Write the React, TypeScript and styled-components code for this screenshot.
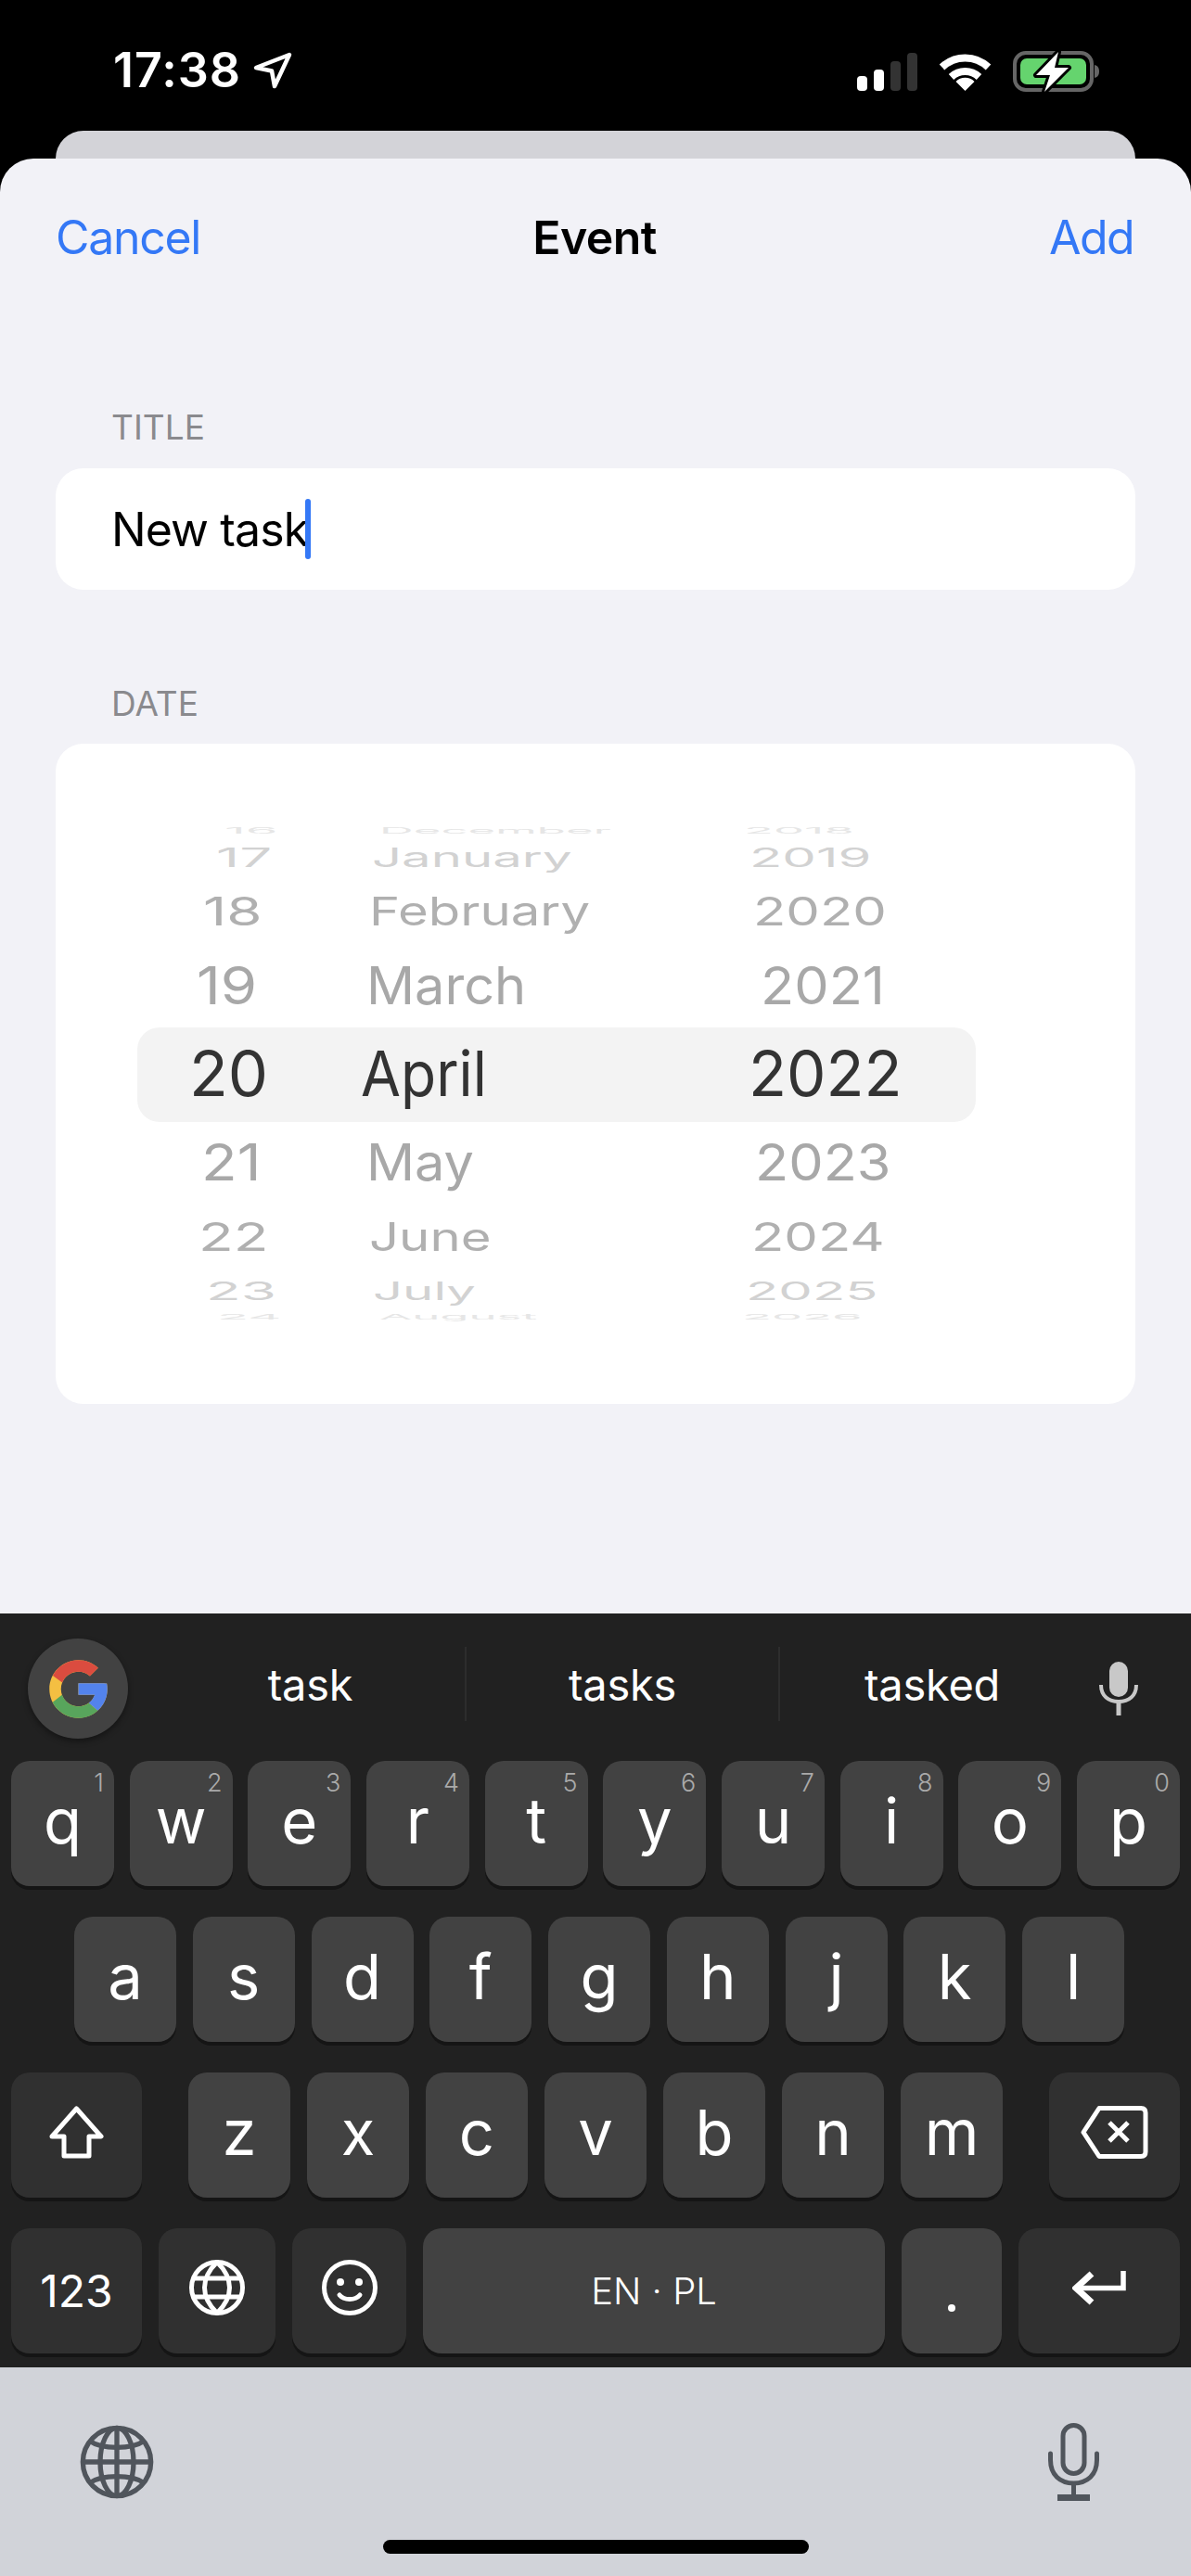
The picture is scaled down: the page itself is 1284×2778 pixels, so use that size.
import React, { FC } from 'react'
import styled, { createGlobalStyle } from 'styled-components'

const BLUE = '#3478f6'
const IOS_FONT = `Inter, "Noto Sans", sans-serif`

const GlobalStyle = createGlobalStyle`
  html, body { margin: 0; padding: 0; background: #000; }
  * { box-sizing: border-box; }
`

// x = left edge of the text in page pixels, one per wheel
interface WheelRow {
  day: string
  month: string
  year: string
  x: [number, number, number]
  height: number
  sx: number
  sy: number
  color: string
  active?: boolean
}

const WHEEL: WheelRow[] = [
  { day: '16', month: 'December', year: '2018', x: [245, 412, 805], height: 16, sx: 0.76, sy: 0.13, color: '#e6e6e6' },
  { day: '17', month: 'January', year: '2019', x: [236, 404, 811], height: 42, sx: 0.84, sy: 0.42, color: '#d2d2d2' },
  { day: '18', month: 'February', year: '2020', x: [222, 401, 815], height: 74, sx: 0.84, sy: 0.64, color: '#b0b0b0' },
  { day: '19', month: 'March', year: '2021', x: [215, 398, 823], height: 86, sx: 0.86, sy: 0.84, color: '#a8a8a8' },
  { day: '20', month: 'April', year: '2022', x: [207, 392, 810], height: 103, sx: 0.93, sy: 1, color: '#333333', active: true },
  { day: '21', month: 'May', year: '2023', x: [220, 398, 817], height: 88, sx: 0.86, sy: 0.82, color: '#a8a8a8' },
  { day: '22', month: 'June', year: '2024', x: [217, 401, 813], height: 74, sx: 0.84, sy: 0.63, color: '#b0b0b0' },
  { day: '23', month: 'July', year: '2025', x: [225, 405, 807], height: 42, sx: 0.84, sy: 0.41, color: '#d2d2d2' },
  { day: '24', month: 'August', year: '2026', x: [237, 412, 803], height: 14, sx: 0.76, sy: 0.12, color: '#e6e6e6' },
]

const WHEEL_COLUMNS = [60, 380, 780]
const WHEEL_WIDTHS = [320, 400, 444]
const TEXT_BEARING = 3

// digits are set wider than the month names
const columnStretch = (column: number, active?: boolean) => {
  if (column === 0) return 1.1
  if (column === 2) return active ? 1.08 : 1.03
  return 1
}

const ROW_ONE = [
  ['q', '1'], ['w', '2'], ['e', '3'], ['r', '4'], ['t', '5'],
  ['y', '6'], ['u', '7'], ['i', '8'], ['o', '9'], ['p', '0'],
]

const LocationIcon = () => (
  <svg width="42" height="40" viewBox="0 0 42 40" fill="none">
    <path d="M39 3 L3 17 L20 20.5 L23 37 Z" stroke="#fff" strokeWidth="4.5" strokeLinejoin="round" />
  </svg>
)

const SignalIcon = () => (
  <svg width="65" height="41" viewBox="0 0 65 41">
    <rect x="0" y="25" width="11" height="16" rx="4" fill="#fff" />
    <rect x="18" y="18" width="11" height="23" rx="4" fill="#fff" />
    <rect x="36" y="9" width="11" height="32" rx="4" fill="#333" />
    <rect x="54" y="0" width="11" height="41" rx="4" fill="#333" />
  </svg>
)

const WifiIcon = () => (
  <svg width="57" height="41" viewBox="0 0 57 41" fill="none">
    <path d="M3.5 15.5 A36 36 0 0 1 53.5 15.5" stroke="#fff" strokeWidth="8" />
    <path d="M13.5 26 A22 22 0 0 1 43.5 26" stroke="#fff" strokeWidth="8" />
    <path d="M28.5 41 L18.5 31 A14 14 0 0 1 38.5 31 Z" fill="#fff" />
  </svg>
)

const BatteryIcon = () => (
  <svg width="94" height="48" viewBox="0 0 94 48" fill="none">
    <rect x="2" y="4" width="83" height="40" rx="12" stroke="#666" strokeWidth="4" />
    <rect x="8" y="10" width="71" height="28" rx="7" fill="#65d46e" />
    <path d="M88 17 C92 18 93 21 93 24 C93 27 92 30 88 31 Z" fill="#666" />
    <path
      d="M49 3 L25 28 L40 28 L34 46 L60 20 L45 20 Z"
      fill="#fff"
      stroke="#000"
      strokeWidth="6"
      strokeLinejoin="round"
      paintOrder="stroke"
    />
  </svg>
)

const GoogleLogo = () => (
  <svg width="75" height="75" viewBox="0 0 48 48">
    <path fill="#f4bf42" d="M43.611 20.083H42V20H24v8h11.303c-1.649 4.657-6.08 8-11.303 8-6.627 0-12-5.373-12-12s5.373-12 12-12c3.059 0 5.842 1.154 7.961 3.039l5.657-5.657C34.046 6.053 29.268 4 24 4 12.955 4 4 12.955 4 24s8.955 20 20 20 20-8.955 20-20c0-1.341-.138-2.65-.389-3.917z" />
    <path fill="#db4c3f" d="M6.306 14.691l6.571 4.819C14.655 15.108 18.961 12 24 12c3.059 0 5.842 1.154 7.961 3.039l5.657-5.657C34.046 6.053 29.268 4 24 4 16.318 4 9.656 8.337 6.306 14.691z" />
    <path fill="#58a55c" d="M24 44c5.166 0 9.86-1.977 13.409-5.192l-6.19-5.238A11.91 11.91 0 0 1 24 36c-5.202 0-9.619-3.317-11.283-7.946l-6.522 5.025C9.505 39.556 16.227 44 24 44z" />
    <path fill="#5383ec" d="M43.611 20.083H42V20H24v8h11.303a12.04 12.04 0 0 1-4.087 5.571l.003-.002 6.19 5.238C36.971 39.205 44 34 44 24c0-1.341-.138-2.65-.389-3.917z" />
  </svg>
)

const SuggestMic = () => (
  <svg width="42" height="58" viewBox="0 0 42 58" fill="none">
    <rect x="11" y="0" width="20" height="38" rx="10" fill="#c8c8c8" />
    <path d="M2 25 C2 37 10 43 21 43 C32 43 40 37 40 25" stroke="#c8c8c8" strokeWidth="4" />
    <path d="M21 43 V58" stroke="#c8c8c8" strokeWidth="5" />
  </svg>
)

const ShiftIcon = () => (
  <svg width="59" height="57" viewBox="0 0 59 57" fill="none">
    <path d="M29.5 3 L56 33 H43 V54 H16 V33 H3 Z" stroke="#fff" strokeWidth="5" strokeLinejoin="round" />
  </svg>
)

const BackspaceIcon = () => (
  <svg width="73" height="57" viewBox="0 0 73 57" fill="none">
    <path d="M20 2.5 H65 Q70 2.5 70 7.5 V49.5 Q70 54.5 65 54.5 H20 L3 28.5 Z" stroke="#fff" strokeWidth="5" strokeLinejoin="round" />
    <path d="M31 18 L51 38 M51 18 L31 38" stroke="#fff" strokeWidth="5" />
  </svg>
)

const KeyGlobeIcon = () => (
  <svg width="60" height="60" viewBox="0 0 60 60" fill="none" stroke="#fff" strokeWidth="5">
    <circle cx="30" cy="30" r="27.5" />
    <path d="M30 2.5 C12 20 12 40 30 57.5 C48 40 48 20 30 2.5 Z" />
    <path d="M5 20 H55 M5 40 H55" />
  </svg>
)

const BottomGlobeIcon = () => (
  <svg width="80" height="80" viewBox="0 0 60 60" fill="none" stroke="#50555c" strokeWidth="4">
    <circle cx="30" cy="30" r="27.5" />
    <ellipse cx="30" cy="30" rx="13.5" ry="27.5" />
    <path d="M30 2.5 V57.5 M2.5 30 H57.5" />
    <path d="M8 13 C18 20 42 20 52 13 M8 47 C18 40 42 40 52 47" />
  </svg>
)

const EmojiIcon = () => (
  <svg width="60" height="60" viewBox="0 0 60 60" fill="none">
    <circle cx="30" cy="30" r="27.5" stroke="#fff" strokeWidth="5" />
    <circle cx="20" cy="24" r="4" fill="#fff" />
    <circle cx="40" cy="24" r="4" fill="#fff" />
    <path d="M19 38 C24 44 36 44 41 38" stroke="#fff" strokeWidth="5" strokeLinecap="round" />
  </svg>
)

const ReturnIcon = () => (
  <svg width="58" height="37" viewBox="0 0 58 37" fill="none" stroke="#fff">
    <path d="M55 0 V18.5 H4" strokeWidth="5.5" />
    <path d="M21 3 L4 18.5 L21 34" strokeWidth="7" />
  </svg>
)

const BottomMic = () => (
  <svg width="55" height="84" viewBox="0 0 55 84" fill="none" stroke="#50555c">
    <rect x="16" y="2.5" width="23" height="52" rx="11.5" strokeWidth="5" />
    <path d="M2.5 33 V40 C2.5 56 13 65 27.5 65 C42 65 52.5 56 52.5 40 V33" strokeWidth="5" strokeLinecap="round" />
    <path d="M27.5 65 V80" strokeWidth="5" />
    <path d="M10 80.5 H45" strokeWidth="7" />
  </svg>
)

const App: FC = () => (
  <Screen>
    <GlobalStyle />
    <StatusBar>
      <Clock>
        <Time>17:38</Time>
        <LocationIcon />
      </Clock>
      <StatusIcons>
        <SignalIcon />
        <WifiIcon />
        <BatteryIcon />
      </StatusIcons>
    </StatusBar>
    <BackCard />
    <Sheet>
      <NavBar>
        <NavAction>Cancel</NavAction>
        <NavTitle>Event</NavTitle>
        <NavAction $right>Add</NavAction>
      </NavBar>

      <FieldLabel $top={97}>TITLE</FieldLabel>
      <TitleField>
        New task
        <Caret />
      </TitleField>

      <FieldLabel $top={100}>DATE</FieldLabel>
      <DateCard>
        <WheelHighlight />
        {WHEEL.map(row => (
          <WheelLine key={row.day} $height={row.height}>
            {[row.day, row.month, row.year].map((label, i) => (
              <WheelColumn key={label} $width={WHEEL_WIDTHS[i]}>
                <WheelText
                  $offset={row.x[i] - WHEEL_COLUMNS[i] - TEXT_BEARING}
                  $sx={row.sx * columnStretch(i, row.active)}
                  $sy={row.sy}
                  $color={row.color}
                >
                  {label}
                </WheelText>
              </WheelColumn>
            ))}
          </WheelLine>
        ))}
      </DateCard>
    </Sheet>

    <Keyboard>
      <SuggestionBar>
        <GoogleBadge>
          <GoogleLogo />
        </GoogleBadge>
        <Suggestions>
          <Suggestion $width={335}>task</Suggestion>
          <Suggestion $width={338}>tasks</Suggestion>
          <Suggestion $width={328} $last>
            tasked
          </Suggestion>
        </Suggestions>
        <MicSlot>
          <SuggestMic />
        </MicSlot>
      </SuggestionBar>

      <KeyRows>
        <KeyRow>
          {ROW_ONE.map(([letter, hint]) => (
            <Key key={letter} $width={111}>
              <Hint>{hint}</Hint>
              {letter}
            </Key>
          ))}
        </KeyRow>
        <KeyRow $left={68} $right={60}>
          {'asdfghjkl'.split('').map(letter => (
            <Key key={letter} $width={110}>
              {letter}
            </Key>
          ))}
        </KeyRow>
        <KeyRow>
          <Key $width={141} $special>
            <ShiftIcon />
          </Key>
          <LetterGroup>
            {'zxcvbnm'.split('').map(letter => (
              <Key key={letter} $width={110}>
                {letter}
              </Key>
            ))}
          </LetterGroup>
          <Key $width={141} $special>
            <BackspaceIcon />
          </Key>
        </KeyRow>
        <KeyRow>
          <Key $width={141} $special $small>
            123
          </Key>
          <Key $width={126} $special>
            <KeyGlobeIcon />
          </Key>
          <Key $width={123} $special>
            <EmojiIcon />
          </Key>
          <SpaceKey>EN · PL</SpaceKey>
          <Key $width={108}>
            <Dot />
          </Key>
          <Key $width={174} $special>
            <ReturnIcon />
          </Key>
        </KeyRow>
      </KeyRows>
    </Keyboard>

    <BottomBar>
      <BottomIcons>
        <BottomGlobeIcon />
        <BottomMic />
      </BottomIcons>
      <HomeIndicator />
    </BottomBar>
  </Screen>
)

const Screen = styled.div`
  width: 1284px;
  height: 2778px;
  background: #000;
  overflow: hidden;
  display: flex;
  flex-direction: column;
  font-family: ${IOS_FONT};
`
const StatusBar = styled.div`
  height: 141px;
  flex: none;
  padding: 53px 98px 0 122px;
  display: flex;
  justify-content: space-between;
  align-items: flex-start;
`
const Clock = styled.div`
  display: flex;
  align-items: center;
  gap: 13px;
  height: 46px;
  color: #fff;
`
const Time = styled.span`
  font-size: 52px;
  font-weight: 600;
  letter-spacing: 1px;
  line-height: 46px;
`
const StatusIcons = styled.div`
  display: flex;
  align-items: center;
  gap: 23px;
  height: 48px;
`
const BackCard = styled.div`
  height: 30px;
  flex: none;
  margin: 0 60px;
  background: #d3d3d8;
  border-radius: 30px 30px 0 0;
`
const Sheet = styled.div`
  height: 1569px;
  flex: none;
  background: #f2f2f7;
  border-radius: 36px 36px 0 0;
  display: flex;
  flex-direction: column;
`
const NavBar = styled.div`
  height: 170px;
  flex: none;
  padding: 0 62px 0 60px;
  display: grid;
  grid-template-columns: 1fr auto 1fr;
  align-items: center;
`
const NavAction = styled.span<{ $right?: boolean }>`
  font-size: 50px;
  letter-spacing: ${p => (p.$right ? -1.6 : -1.3)}px;
  text-align: ${p => (p.$right ? 'right' : 'left')};
  color: ${BLUE};
`
const NavTitle = styled.span`
  font-size: 50px;
  font-weight: 600;
  letter-spacing: -0.6px;
  color: #000;
`
const FieldLabel = styled.div<{ $top: number }>`
  margin-top: ${p => p.$top}px;
  padding-left: 120px;
  height: 46px;
  line-height: 46px;
  font-size: 37px;
  color: #8a8a8e;
`
const TitleField = styled.div`
  margin: 21px 60px 0;
  height: 131px;
  padding-left: 60px;
  background: #fff;
  border-radius: 30px;
  display: flex;
  align-items: center;
  font-size: 50px;
  letter-spacing: -0.9px;
  color: #000;
`
const Caret = styled.span`
  width: 6px;
  height: 65px;
  margin-left: -3px;
  border-radius: 3px;
  background: ${BLUE};
`
const DateCard = styled.div`
  position: relative;
  margin: 20px 60px 0;
  height: 712px;
  padding-top: 86px;
  background: #fff;
  border-radius: 30px;
`
const WheelHighlight = styled.div`
  position: absolute;
  top: 306px;
  left: 88px;
  width: 904px;
  height: 102px;
  border-radius: 24px;
  background: #f3f3f3;
`
const WheelLine = styled.div<{ $height: number }>`
  position: relative;
  height: ${p => p.$height}px;
  display: flex;
`
const WheelColumn = styled.div<{ $width: number }>`
  width: ${p => p.$width}px;
  display: flex;
  align-items: center;
`
const WheelText = styled.span<{ $offset: number; $sx: number; $sy: number; $color: string }>`
  margin-left: ${p => p.$offset}px;
  font-size: 67px;
  line-height: 70px;
  white-space: nowrap;
  color: ${p => p.$color};
  transform: scale(${p => p.$sx}, ${p => p.$sy});
  transform-origin: left center;
`
const Keyboard = styled.div`
  height: 813px;
  flex: none;
  padding-top: 27px;
  background: #212121;
  color: #fff;
`
const SuggestionBar = styled.div`
  height: 108px;
  padding-left: 30px;
  display: flex;
  align-items: center;
`
const GoogleBadge = styled.div`
  width: 108px;
  height: 108px;
  flex: none;
  border-radius: 50%;
  background: #424242;
  box-shadow: 0 3px 6px rgba(0, 0, 0, 0.4);
  display: flex;
  align-items: center;
  justify-content: center;
`
const Suggestions = styled.div`
  margin-left: 30px;
  margin-bottom: 10px;
  display: flex;
`
const Suggestion = styled.div<{ $width: number; $last?: boolean }>`
  width: ${p => p.$width}px;
  height: 80px;
  display: flex;
  align-items: center;
  justify-content: center;
  font-size: 47px;
  letter-spacing: -0.3px;
  border-right: ${p => (p.$last ? 'none' : '2px solid #2d2d2d')};
`
const MicSlot = styled.div`
  margin-left: 16px;
  display: flex;
`
const KeyRows = styled.div`
  margin-top: 24px;
  padding: 0 12px;
  display: flex;
  flex-direction: column;
  gap: 33px;
`
const KeyRow = styled.div<{ $left?: number; $right?: number }>`
  display: flex;
  justify-content: space-between;
  padding: 0 ${p => p.$right || 0}px 0 ${p => p.$left || 0}px;
`
const LetterGroup = styled.div`
  display: flex;
  gap: 18px;
`
const Key = styled.div<{ $width: number; $special?: boolean; $small?: boolean }>`
  position: relative;
  width: ${p => p.$width}px;
  height: 135px;
  flex: none;
  border-radius: 20px;
  background: ${p => (p.$special ? '#303030' : '#424242')};
  box-shadow: 0 4px 0 #151515;
  display: flex;
  align-items: center;
  justify-content: center;
  padding-bottom: ${p => (p.$small ? 0 : 7)}px;
  font-size: ${p => (p.$small ? 48 : 67)}px;
  line-height: 1;
`
const Hint = styled.span`
  position: absolute;
  top: 10px;
  right: 11px;
  font-size: 27px;
  font-weight: 300;
  color: #aaa;
`
const SpaceKey = styled(Key).attrs({ $width: 498 })`
  font-size: 40px;
  font-weight: 300;
  padding: 0;
`
const Dot = styled.span`
  width: 8px;
  height: 8px;
  margin-top: 44px;
  border-radius: 50%;
  background: #fff;
`
const BottomBar = styled.div`
  height: 225px;
  flex: none;
  padding-top: 60px;
  background: #d1d3d9;
  display: flex;
  flex-direction: column;
`
const BottomIcons = styled.div`
  height: 84px;
  padding: 0 99px 0 86px;
  display: flex;
  align-items: center;
  justify-content: space-between;
`
const HomeIndicator = styled.div`
  width: 459px;
  height: 15px;
  margin: 42px 0 0 413px;
  border-radius: 8px;
  background: #000;
`

export default App
